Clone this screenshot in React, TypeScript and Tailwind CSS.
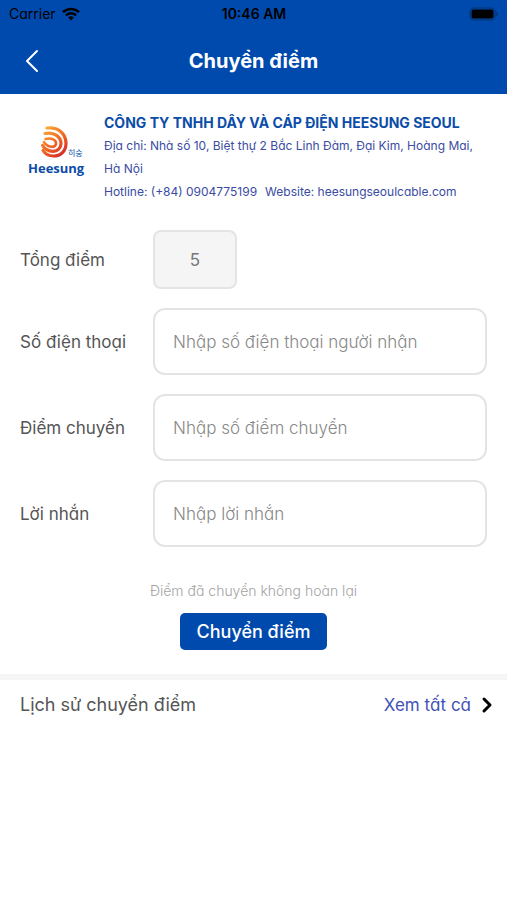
import React from 'react'
import { ChevronRight } from 'lucide-react'

type Field = { id: string; label: string; placeholder: string; type: string }

const fields: Field[] = [
    { id: 'phone', label: 'Số điện thoại', placeholder: 'Nhập số điện thoại người nhận', type: 'tel' },
    { id: 'points', label: 'Điểm chuyển', placeholder: 'Nhập số điểm chuyển', type: 'text' },
    { id: 'message', label: 'Lời nhắn', placeholder: 'Nhập lời nhắn', type: 'text' },
]

function WifiIcon() {
    return (
        <svg viewBox="0 0 18 14" className="h-[14px] w-[18px]" fill="none" stroke="currentColor" aria-hidden="true">
            <path d="M1 5.2a11.6 11.6 0 0 1 16 0" strokeWidth="2.5" />
            <path d="M3.9 8.3a7.4 7.4 0 0 1 10.2 0" strokeWidth="2.3" />
            <path d="M9 13.5 6.2 10.6a4 4 0 0 1 5.6 0z" fill="currentColor" stroke="none" />
        </svg>
    )
}

function BatteryIcon() {
    return (
        <svg viewBox="0 0 30 14" className="h-[14px] w-[30px]" aria-hidden="true">
            <rect x="1" y="1" width="25" height="12" rx="3.5" fill="none" stroke="#000" strokeOpacity="0.35" />
            <rect x="2.5" y="2.5" width="22" height="9" rx="2" fill="#000" />
            <path d="M27.5 5v4c1-.3 1.5-1.1 1.5-2s-.5-1.7-1.5-2z" fill="#000" fillOpacity="0.35" />
        </svg>
    )
}

function StatusBar() {
    return (
        <div className="grid h-7 grid-cols-3 items-center pl-[9px] pr-2 text-sm text-black">
            <div className="flex items-center gap-[6px]">
                <span>Carrier</span>
                <WifiIcon />
            </div>
            <span className="text-center font-semibold">10:46 AM</span>
            <div className="justify-self-end">
                <BatteryIcon />
            </div>
        </div>
    )
}

function Logo() {
    return (
        <div className="flex w-[56px] shrink-0 flex-col pt-[14px] text-[#0b4da8]">
            <div className="flex items-end pl-3">
                <svg viewBox="0 0 28 34" className="h-[34px] w-[28px]" fill="none" strokeLinecap="round" aria-hidden="true">
                    <defs>
                        <linearGradient id="flame" x1="0" y1="0" x2="28" y2="34" gradientUnits="userSpaceOnUse">
                            <stop offset="0.1" stopColor="#fbb03b" />
                            <stop offset="0.5" stopColor="#f26a22" />
                            <stop offset="0.9" stopColor="#d3202a" />
                        </linearGradient>
                    </defs>
                    <g stroke="url(#flame)" strokeWidth="3.2">
                        <path d="M7 3C18 1.500 26 8.500 26 18.500c0 7.500-5.300 12.500-12.500 12.500-4.500 0-8.300-2-10.500-5.500" />
                        <path d="M5 8.500C14.500 6.500 21 12 21 18.500c0 4.700-3.500 7.800-8 7.800-4.500 0-8.500-2.300-10.500-6" />
                        <path d="M5.500 14C12 12.500 16 15 16 18.300c0 2.200-1.600 3.500-3.900 3.500-3 0-6.100-1.800-8.100-4.600" strokeWidth="2.6" />
                    </g>
                </svg>
                <span className="whitespace-nowrap font-['Noto_Sans_CJK_KR',sans-serif] text-[8px] leading-3">히숭</span>
            </div>
            <span className="font-['Open_Sans',sans-serif] text-[13px] font-bold leading-[18px]">Heesung</span>
        </div>
    )
}

function CompanyInfo() {
    return (
        <section className="flex items-start gap-5 pl-7 pr-5 pt-[17px] text-[#3a4ba3]">
            <Logo />
            <div className="min-w-0 text-xs leading-[23px]">
                <h2 className="whitespace-nowrap text-sm leading-[23px] font-bold text-[#0b4da8]">CÔNG TY TNHH DÂY VÀ CÁP ĐIỆN HEESUNG SEOUL</h2>
                <p>Địa chỉ: Nhà số 10, Biệt thự 2 Bắc Linh Đàm, Đại Kim, Hoàng Mai, Hà Nội</p>
                <p className="flex gap-2 whitespace-nowrap">
                    <span>Hotline: (+84) 0904775199</span>
                    <span>Website: heesungseoulcable.com</span>
                </p>
            </div>
        </section>
    )
}

export default function App() {
    return (
        <div className="min-h-screen bg-white font-['Inter',sans-serif] text-[#555] [font-feature-settings:'cv11']">
            <header className="bg-[#004aad]">
                <StatusBar />
                <div className="grid h-[66px] grid-cols-[56px_1fr_56px] items-center text-white">
                    <button aria-label="Quay lại" className="flex h-full items-center pl-[25px]">
                        <svg viewBox="0 0 14 24" className="h-6 w-[14px]" fill="none" stroke="currentColor" strokeWidth="2" aria-hidden="true">
                            <path d="M12 2 2 12l10 10" strokeLinecap="round" strokeLinejoin="round" />
                        </svg>
                    </button>
                    <h1 className="text-center text-xl font-bold">Chuyển điểm</h1>
                </div>
            </header>

            <CompanyInfo />

            <form className="px-5 pt-[27px]" onSubmit={(e) => e.preventDefault()}>
                <div className="grid grid-cols-[133px_1fr] items-center gap-y-[19px]">
                    <label htmlFor="total" className="text-[17px] leading-6">Tổng điểm</label>
                    <input
                        id="total"
                        readOnly
                        value="5"
                        className="h-[59px] w-[84px] rounded-lg border-2 border-[#e4e4e4] bg-[#f5f5f5] text-center text-[17px] text-[#777] outline-none"
                    />
                    {fields.map((field) => (
                        <React.Fragment key={field.id}>
                            <label htmlFor={field.id} className="text-[17px] leading-6">{field.label}</label>
                            <input
                                id={field.id}
                                type={field.type}
                                placeholder={field.placeholder}
                                className="h-[67px] w-full rounded-xl border-2 border-[#e4e4e4] px-[18px] text-[17px] font-light outline-none placeholder:text-[#888]"
                            />
                        </React.Fragment>
                    ))}
                </div>

                <div className="flex flex-col items-center gap-3 pt-[34px] pb-6">
                    <p className="text-sm font-light text-[#a3a3a3]">Điểm đã chuyển không hoàn lại</p>
                    <button type="submit" className="h-[37px] rounded-[5px] bg-[#004aad] px-[17px] text-lg font-medium text-white">
                        Chuyển điểm
                    </button>
                </div>
            </form>

            {/* History */}
            <section className="flex items-center justify-between border-t-[6px] border-[#f5f5f5] pl-5 pr-2 pt-[13px]">
                <h2 className="text-lg leading-6">Lịch sử chuyển điểm</h2>
                <a href="#history" className="flex items-center gap-1 text-[17px] leading-6 text-[#3f51b5]">
                    Xem tất cả
                    <ChevronRight className="h-6 w-6 text-black" strokeWidth={3} />
                </a>
            </section>
        </div>
    )
}
